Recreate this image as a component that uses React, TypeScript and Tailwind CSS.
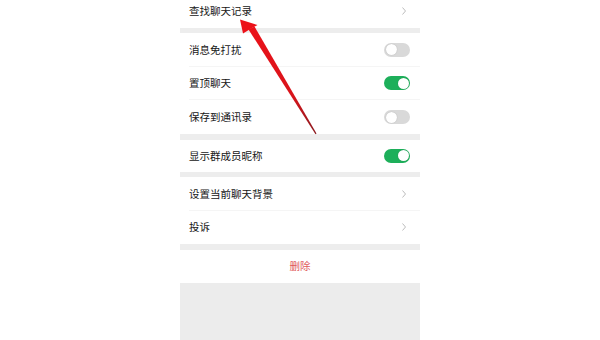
import { type ReactNode } from "react";

type RowProps = {
  label: string;
  height: string;
  divider?: boolean;
  children?: ReactNode;
};

function Row({ label, height, divider, children }: RowProps) {
  return (
    <div className={`relative flex items-center justify-between pl-[9px] pr-[10px] ${height}`}>
      <span className="text-[10.5px] leading-none text-[#161616]">{label}</span>
      {children}
      {divider ? (
        <span aria-hidden="true" className="absolute bottom-0 left-[9px] right-0 h-px bg-[#f5f5f5]" />
      ) : null}
    </div>
  );
}

function Chevron() {
  return (
    <svg width="6" height="10" viewBox="0 0 6 10" className="mr-[3px]">
      <polyline points="1.5,1.5 4.5,5 1.5,8.5" fill="none" stroke="#bdbdbd" strokeWidth="1" />
    </svg>
  );
}

function Toggle({ on }: { on: boolean }) {
  return (
    <span
      className={`flex h-[14px] w-[26px] items-center rounded-full p-[1.5px] ${
        on ? "justify-end bg-[#1daf5a]" : "justify-start bg-[#d9d9d9]"
      }`}
    >
      <span className="h-[11px] w-[11px] rounded-full bg-white shadow-[0_0_1px_rgba(0,0,0,0.25)]" />
    </span>
  );
}

function Gap({ height }: { height: string }) {
  return <div className={`${height} bg-[#ededed]`} />;
}

export default function App() {
  return (
    <div
      className="relative h-[340px] w-[600px] overflow-hidden bg-white"
      style={{ fontFamily: '"Noto Sans CJK SC", "Noto Sans", sans-serif' }}
    >
      <div className="mx-auto -mt-[6px] flex w-[240px] flex-col">
        <Row label="查找聊天记录" height="h-[34px]">
          <Chevron />
        </Row>
        <Gap height="h-[5px]" />
        <Row label="消息免打扰" height="h-[33.7px]" divider>
          <Toggle on={false} />
        </Row>
        <Row label="置顶聊天" height="h-[33.6px]" divider>
          <Toggle on />
        </Row>
        <Row label="保存到通讯录" height="h-[33.7px]">
          <Toggle on={false} />
        </Row>
        <Gap height="h-[6px]" />
        <Row label="显示群成员昵称" height="h-[32px]">
          <Toggle on />
        </Row>
        <Gap height="h-[5px]" />
        <Row label="设置当前聊天背景" height="h-[34px]" divider>
          <Chevron />
        </Row>
        <Row label="投诉" height="h-[33px]">
          <Chevron />
        </Row>
        <Gap height="h-[6px]" />
        <div className="flex h-[33px] items-center justify-center">
          <span className="text-[10.5px] leading-none text-[#e05a5a]">删除</span>
        </div>
        <div className="h-[70px] bg-[#ececec]" />
      </div>

      <svg
        aria-hidden="true"
        className="pointer-events-none absolute left-0 top-0"
        width="600"
        height="340"
        viewBox="0 0 600 340"
      >
        <defs>
          <linearGradient id="shaft" x1="316" y1="134" x2="245" y2="25" gradientUnits="userSpaceOnUse">
            <stop offset="0" stopColor="#8a1a1f" />
            <stop offset="0.35" stopColor="#d9141b" />
            <stop offset="1" stopColor="#ec1119" />
          </linearGradient>
        </defs>
        <polygon points="315.5,134.2 316.5,133.6 254.5,26.5 248.5,29.5" fill="url(#shaft)" />
        <polygon points="240,19.5 257.5,25 249.5,29.5 243,33.5" fill="#ec1119" />
      </svg>
    </div>
  );
}
